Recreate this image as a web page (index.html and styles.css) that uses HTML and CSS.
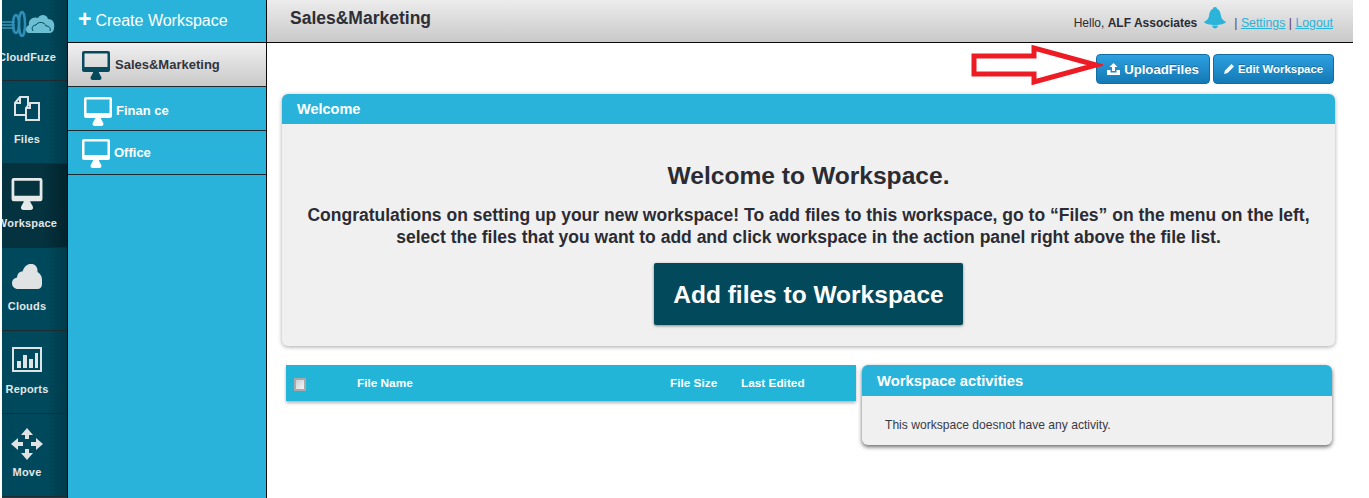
FILE: index.html
```html
<!DOCTYPE html>
<html lang="en">
<head>
<meta charset="utf-8">
<title>Workspace</title>
<link rel="stylesheet" href="styles.css">
</head>
<body>
<svg class="defs" width="0" height="0" aria-hidden="true">
  <symbol id="monitor" viewBox="0 0 28 29">
    <path fill-rule="evenodd" d="M2 0h24a2 2 0 0 1 2 2v17a2 2 0 0 1-2 2H2a2 2 0 0 1-2-2V2a2 2 0 0 1 2-2zM2.500 2.500v13.500h23V2.500z"/>
    <path d="M11.500 20h5c.4 3 3 5 3 7 0 1.200-1 2-2 2h-7c-1 0-2-.8-2-2 0-2 2.600-4 3-7z"/>
  </symbol>
</svg>
<div class="app">
  <nav class="rail">
    <div class="rail-inner">
      <a class="rail-item logo">
        <svg class="logo-icon" width="54" height="30" viewBox="0 0 54 30">
          <path d="M0 18h14M0 15h14M0 21h14" stroke="#3a93b5" stroke-width="1.500" fill="none"/>
          <ellipse cx="15" cy="17" rx="3" ry="9" fill="none" stroke="#2f8fb8" stroke-width="2.500"/>
          <ellipse cx="21" cy="17" rx="3" ry="12" fill="none" stroke="#2f8fb8" stroke-width="2.500"/>
          <path d="M28 26c-4 0-4-7 0-8-1-6 5-9 9-7 3-5 9-3 10 1 5 0 7 4 6 9 0 3-2 5-5 5z" fill="#6cbfd3"/>
          <path d="M32 24c-2-3 0-6 3-6 2-4 9-3 10 1 3 0 5 2 4 5" fill="none" stroke="#00495c" stroke-width="1"/>
        </svg>
        <span>CloudFuze</span>
      </a>
      <a class="rail-item">
        <svg class="rail-icon icon-files" width="26" height="25" viewBox="0 0 26 25" fill="none" stroke="#dfe3e4" stroke-width="2">
          <path d="M1 7l5-6h8v18H1z"/>
          <path d="M12 12l4-5h9v17H12z" fill="#00495c"/>
          <path d="M6 1v6H1M16 7v5h-4"/>
        </svg>
        <span>Files</span>
      </a>
      <a class="rail-item active">
        <svg class="rail-icon rail-monitor" width="32" height="32"><use href="#monitor"/></svg>
        <span>Workspace</span>
      </a>
      <a class="rail-item">
        <svg class="rail-icon" width="30" height="25" viewBox="0 0 30 25">
          <path d="M6 25c-3.500 0-6-2.500-6-6 0-3 2-5 5-5.500C5.500 9 8 7.500 10.500 7.500 12 3 15-.2 19-.2c4.500 0 7 3.500 6.500 8.200 2.500 1.500 4.500 4 4.500 7.500v5c0 2.500-2 4.500-4.500 4.500z" fill="#dfe3e4"/>
        </svg>
        <span>Clouds</span>
      </a>
      <a class="rail-item">
        <svg class="rail-icon" width="30" height="25" viewBox="0 0 30 25" fill="#dfe3e4">
          <path fill-rule="evenodd" d="M0 0h30v25H0zM2 2v21h26V2z"/>
          <path d="M5 14h4v7H5zM11 8h4v13h-4zM17 12h4v9h-4zM23 6h3v15h-3z"/>
        </svg>
        <span>Reports</span>
      </a>
      <a class="rail-item">
        <svg class="rail-icon icon-move" width="32" height="32" viewBox="0 0 32 32" fill="#dfe3e4">
          <path d="M16 0l6 7h-4v4h-4V7h-4zM16 32l-6-7h4v-4h4v4h4zM0 16l7-6v4h5v4H7v4zM32 16l-7 6v-4h-5v-4h5v-4z"/>
        </svg>
        <span>Move</span>
      </a>
    </div>
  </nav>

  <aside class="spaces">
    <a class="create"><b class="plus">+</b><span>Create Workspace</span></a>
    <a class="space selected">
      <svg class="space-icon" width="28" height="29"><use href="#monitor"/></svg>
      <span>Sales&amp;Marketing</span>
    </a>
    <a class="space indented">
      <svg class="space-icon" width="28" height="29"><use href="#monitor"/></svg>
      <span>Finan ce</span>
    </a>
    <a class="space">
      <svg class="space-icon" width="28" height="29"><use href="#monitor"/></svg>
      <span>Office</span>
    </a>
  </aside>

  <div class="main">
    <header class="topbar">
      <h1>Sales&amp;Marketing</h1>
      <div class="user">
        <span>Hello, <b>ALF Associates</b></span>
        <svg class="bell" width="22" height="22" viewBox="0 0 22 22" fill="#2bb3da">
          <path d="M11 0c1.300 0 2 .8 2 1.800C16 3 16.500 6 17 9c.4 2.500 1.500 4 5 6-1 2-6 3-11 3S1 17 0 15c3.500-2 4.600-3.500 5-6 .5-3 1-6 4-7.200C9 .8 9.700 0 11 0z"/>
          <path d="M8 18.500c.5 2 1.500 3 3 3s2.500-1 3-3z"/>
        </svg>
        <span class="links">| <a>Settings</a> | <a>Logout</a></span>
      </div>
    </header>

    <div class="content">
      <div class="actions">
        <svg class="arrow" width="132" height="40" viewBox="0 0 132 40">
          <path d="M3 11h60V3l62 17-62 17v-8H3z" fill="#fff" stroke="#ed1c24" stroke-width="5"/>
        </svg>
        <a class="btn btn-upload">
          <svg width="13" height="12" viewBox="0 0 13 12" fill="#fff"><path d="M6.500 0l4 4H8v4H5V4H2.500zM0 7h3.500v2.500h6V7H13v5H0z"/></svg>
          <span>UploadFiles</span>
        </a>
        <a class="btn btn-edit">
          <svg width="10" height="10" viewBox="0 0 10 10" fill="#fff"><path d="M7.500 0L10 2.500 3.500 9 0 10l1-3.500z"/></svg>
          <span>Edit Workspace</span>
        </a>
      </div>

      <section class="welcome">
        <div class="panel-head">Welcome</div>
        <div class="welcome-body">
          <h2>Welcome to Workspace.</h2>
          <p>Congratulations on setting up your new workspace! To add files to this workspace, go to “Files” on the menu on the left,<br>select the files that you want to add and click workspace in the action panel right above the file list.</p>
          <a class="add-btn">Add files to Workspace</a>
        </div>
      </section>

      <div class="lower">
        <div class="file-head">
          <span class="check"></span>
          <span class="col-name">File Name</span>
          <span class="col-size">File Size</span>
          <span class="col-date">Last Edited</span>
        </div>
        <section class="activity">
          <div class="activity-head">Workspace activities</div>
          <div class="activity-body">This workspace doesnot have any activity.</div>
        </section>
      </div>
    </div>
  </div>
</div>
</body>
</html>
```

FILE: styles.css
```css
* { box-sizing: border-box; }
html, body { margin: 0; height: 100%; background: #fff; overflow: hidden; }
body { font-family: "Liberation Sans", Arial, sans-serif; color: #2b2b33; }
.defs { position: absolute; }
a { display: block; }

.app { display: flex; width: 1351px; height: 498px; margin-left: 2px; }

.rail { width: 66px; flex: none; overflow: hidden; border-right: 1px solid #0a0a0a; background: #00495c; }
.rail-inner { width: 80px; margin-left: -15px; }
.rail-item {
  height: 83px; display: flex; flex-direction: column; align-items: center; justify-content: flex-end;
  padding-bottom: 18px; font-size: 11px; font-weight: bold; letter-spacing: .2px; color: #e3e6e7;
  border-bottom: 1px solid #1d2b30;
  background: linear-gradient(90deg, #00495c 0, #00495c 75%, #013a49 100%);
}
.rail-item.logo { height: 81px; padding-bottom: 17px; }
.rail-item.logo .logo-icon { margin-bottom: 14px; margin-left: 2px; }
.rail-icon { margin-bottom: 11px; }
.rail-icon.icon-files { margin-bottom: 12px; }
.rail-icon.icon-move { margin-bottom: 6px; }
.rail-item.active { background: linear-gradient(90deg, #05323f 0, #05323f 70%, #02242d 100%); height: 84px; }
.rail-monitor { fill: #e6e9ea; }
.rail-icon.rail-monitor { margin-bottom: 7px; }

.spaces { width: 199px; flex: none; background: #2ab3da; border-right: 1px solid #0a0a0a; }
.create {
  height: 43px; padding-left: 10px; display: flex; align-items: center; gap: 4px;
  color: #fff; font-size: 16px; border-bottom: 1px solid #0a0a0a;
}
.plus { font-size: 23px; line-height: 1; margin-top: -4px; }
.space {
  height: 44px; padding: 2px 0 0 14px; display: flex; align-items: center; gap: 4px;
  color: #fff; font-size: 13px; font-weight: bold; border-bottom: 1px solid #1d2b30;
}
.space span { margin-top: -2px; }
.space-icon { fill: #fff; flex: none; }
.space.indented { padding: 5px 0 0 16px; gap: 4px; }
.space.selected {
  color: #33333d; background: linear-gradient(#f0f0f0, #c9c9c9); gap: 5px;
}
.space.selected .space-icon { fill: #064a5e; }

.main { flex: 1; min-width: 0; }
.topbar {
  height: 43px; display: flex; justify-content: space-between; align-items: flex-start;
  padding: 0 20px 0 23px; border-bottom: 1px solid #0a0a0a;
  background: linear-gradient(#ececec, #c9c9c9);
}
.topbar h1 { margin: 8px 0 0; font-size: 17.500px; font-weight: bold; color: #2e2e36; }
.user { display: flex; align-items: flex-start; font-size: 12px; padding-top: 16px; }
.bell { margin: -9px 0 0 7px; }
.links { margin-left: 8px; color: #5a3a6a; font-size: 12.300px; }
.links a { display: inline; color: #2bb3da; text-decoration: underline; }

.content { padding: 11px 18px 0 15px; }
.actions { position: relative; display: flex; justify-content: flex-end; gap: 3px; height: 30px; padding-right: 1px; }
.arrow { position: absolute; right: 232px; top: -9px; }
.btn {
  display: flex; align-items: center; justify-content: center; gap: 4px;
  height: 30px; border-radius: 4px; color: #fff; font-weight: bold;
  background: linear-gradient(#2e9fe0, #137ab5); border: 1px solid #0f6ea6;
  text-shadow: 0 -1px 0 rgba(0,0,0,.25);
}
.btn-upload { width: 114px; font-size: 13.200px; }
.btn-edit { width: 121px; font-size: 11.400px; }

.welcome {
  margin-top: 10px; height: 252px; border-radius: 6px; background: #f0f0f0;
  box-shadow: 0 1px 4px rgba(0,0,0,.35); overflow: hidden;
}
.panel-head {
  height: 30px; padding-left: 15px; background: #2ab3da; color: #fff;
  font-size: 14.500px; font-weight: bold; line-height: 30px;
}
.welcome-body { display: flex; flex-direction: column; align-items: center; text-align: center; }
.welcome-body h2 { margin: 37px 0 0; font-size: 24.600px; line-height: 30px; color: #2b2b33; }
.welcome-body p { margin: 13px 0 0; font-size: 17.500px; font-weight: bold; line-height: 22px; color: #2b2b33; }
.add-btn {
  margin-top: 15px; width: 309px; height: 62px; line-height: 64px; border-radius: 2px;
  background: #03495c; color: #fff; font-size: 24.500px; font-weight: bold;
  box-shadow: 0 1px 3px rgba(0,0,0,.45);
}

.lower { display: flex; align-items: flex-start; gap: 6px; margin: 19px 4px 0 4px; }
.file-head {
  width: 570px; flex: none; height: 36px; display: flex; align-items: center; position: relative;
  background: #22b5d8; color: #fff; font-size: 11.800px; font-weight: bold;
  box-shadow: 0 2px 3px rgba(0,0,0,.3);
}
.check {
  width: 12px; height: 13px; margin: 2px 0 0 8px; border: 2px solid #a9a9a9;
  background: linear-gradient(135deg, #c9cdd6, #f5f5f5);
}
.col-name { margin-left: 51px; width: 313px; }
.col-size { width: 71px; }
.activity {
  width: 470px; height: 80px; flex: none; border-radius: 6px; background: #f0f0f0;
  box-shadow: 0 2px 4px rgba(0,0,0,.6); overflow: hidden;
}
.activity-head {
  height: 31px; padding: 1px 0 0 15px; line-height: 31px; background: #2ab3da;
  color: #fff; font-size: 14.800px; font-weight: bold;
}
.activity-body { padding: 22px 0 0 23px; font-size: 12.100px; line-height: 14px; color: #3a3a46; }
```
